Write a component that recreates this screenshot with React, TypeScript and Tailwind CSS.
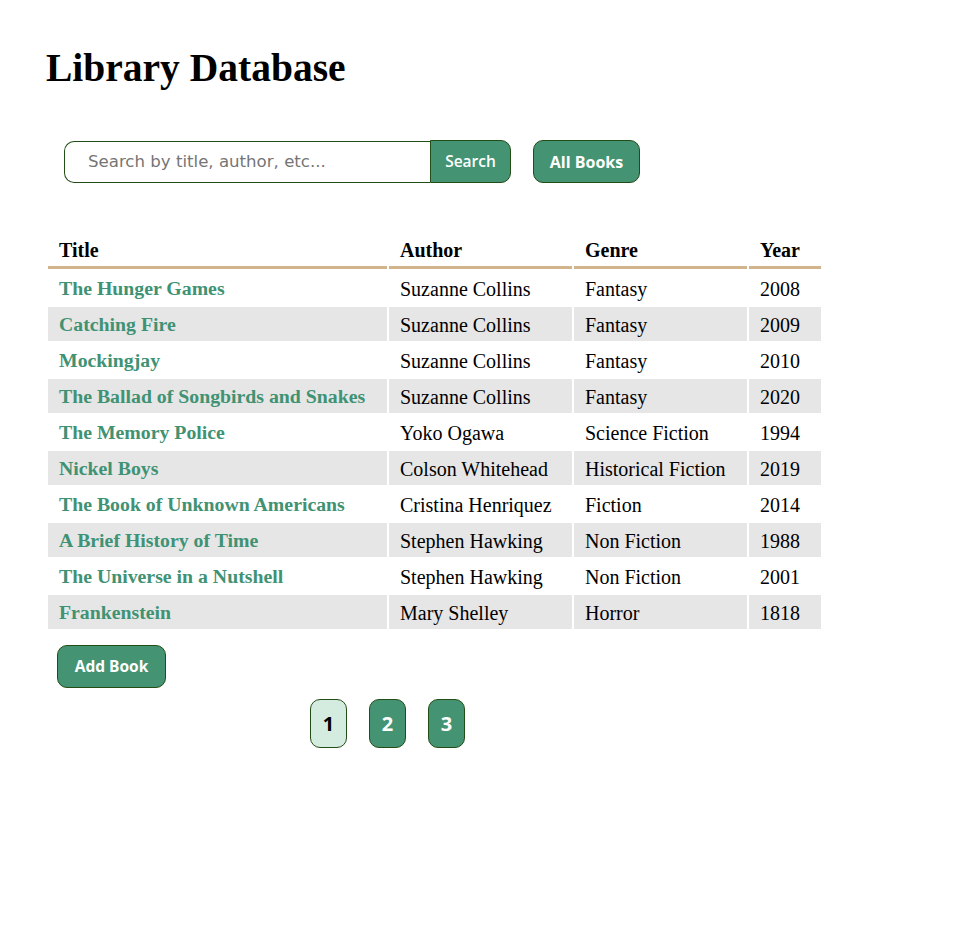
import { useState } from "react"

interface Book {
  title: string
  author: string
  genre: string
  year: number
}

const books: Book[] = [
  { title: "The Hunger Games", author: "Suzanne Collins", genre: "Fantasy", year: 2008 },
  { title: "Catching Fire", author: "Suzanne Collins", genre: "Fantasy", year: 2009 },
  { title: "Mockingjay", author: "Suzanne Collins", genre: "Fantasy", year: 2010 },
  { title: "The Ballad of Songbirds and Snakes", author: "Suzanne Collins", genre: "Fantasy", year: 2020 },
  { title: "The Memory Police", author: "Yoko Ogawa", genre: "Science Fiction", year: 1994 },
  { title: "Nickel Boys", author: "Colson Whitehead", genre: "Historical Fiction", year: 2019 },
  { title: "The Book of Unknown Americans", author: "Cristina Henriquez", genre: "Fiction", year: 2014 },
  { title: "A Brief History of Time", author: "Stephen Hawking", genre: "Non Fiction", year: 1988 },
  { title: "The Universe in a Nutshell", author: "Stephen Hawking", genre: "Non Fiction", year: 2001 },
  { title: "Frankenstein", author: "Mary Shelley", genre: "Horror", year: 1818 },
]

const serif = "font-['Liberation_Serif','Times_New_Roman',serif]"
const sans = "font-['Open_Sans','DejaVu_Sans',sans-serif]"

export default function App() {
  const [query, setQuery] = useState("")
  const [page, setPage] = useState(1)

  return (
    <div className={`${serif} min-h-[945px] bg-white px-[46px] pt-[44px] text-black`}>
      <h1 className="text-[39.5px] font-bold leading-[48px]">Library Database</h1>

      <div className={`${sans} mt-[48px] flex items-center pl-[18px]`}>
        <input
          value={query}
          onChange={(e) => setQuery(e.target.value)}
          placeholder="Search by title, author, etc..."
          className="h-[42px] w-[366px] rounded-l-[10px] border border-r-0 border-[#234d16] px-[23px] font-['DejaVu_Sans',sans-serif] text-[16.6px] placeholder:text-[#757575] focus:outline-none"
        />
        <button
          type="button"
          className="h-[43px] w-[81px] rounded-r-[10px] border border-[#234d16] bg-[#449474] text-[15.5px] font-semibold text-white"
        >
          Search
        </button>
        <button
          type="button"
          className="ml-[22px] h-[43px] w-[107px] rounded-[10px] border border-[#234d16] bg-[#449474] text-[16px] font-bold text-white"
        >
          All Books
        </button>
      </div>

      <table className="mt-[47px] border-separate border-spacing-[2px] text-[20px]">
        <thead>
          <tr>
            <th className="h-[37px] w-[339px] border-b-[3px] border-[#d2b48c] pl-[11px] pt-[1px] text-left font-bold">Title</th>
            <th className="h-[37px] w-[183px] border-b-[3px] border-[#d2b48c] pl-[11px] pt-[1px] text-left font-bold">Author</th>
            <th className="h-[37px] w-[173px] border-b-[3px] border-[#d2b48c] pl-[11px] pt-[1px] text-left font-bold">Genre</th>
            <th className="h-[37px] w-[72px] border-b-[3px] border-[#d2b48c] pl-[11px] pt-[1px] text-left font-bold">Year</th>
          </tr>
        </thead>
        <tbody>
          {books.map((b, i) => (
            <tr key={b.title} className={i % 2 === 1 ? "bg-[#e6e6e6]" : ""}>
              <td className="h-[34px] pl-[11px] pt-[1px] text-[19.8px] font-bold text-[#3f9273]">{b.title}</td>
              <td className="h-[34px] pl-[11px] pt-[1px]">{b.author}</td>
              <td className="h-[34px] pl-[11px] pt-[1px]">{b.genre}</td>
              <td className="h-[34px] pl-[11px] pt-[1px]">{b.year}</td>
            </tr>
          ))}
        </tbody>
      </table>

      <div className={`${sans} mt-[14px] pl-[11px]`}>
        <button
          type="button"
          className="h-[43px] w-[109px] rounded-[10px] border border-[#234d16] bg-[#449474] text-[15.5px] font-bold text-white"
        >
          Add Book
        </button>
      </div>

      <div className={`${sans} mt-[11px] flex gap-[22px] pl-[264px]`}>
        {[1, 2, 3].map((n) => (
          <button
            key={n}
            type="button"
            onClick={() => setPage(n)}
            className={
              n === page
                ? "h-[49px] w-[37px] rounded-[10px] border border-[#234d16] bg-[#d4ece0] text-[20px] font-bold text-black"
                : "h-[49px] w-[37px] rounded-[10px] border border-[#234d16] bg-[#449474] text-[20px] font-bold text-white"
            }
          >
            {n}
          </button>
        ))}
      </div>
    </div>
  )
}
